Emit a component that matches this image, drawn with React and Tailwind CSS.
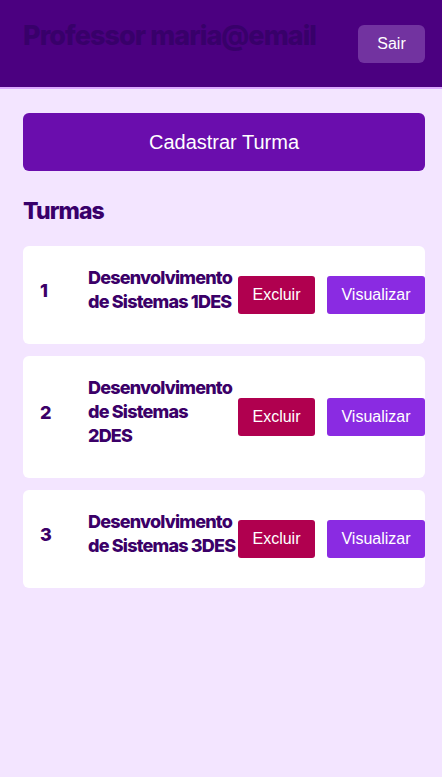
import React from 'react';

const turmas = [
  { id: 1, lines: ['Desenvolvimento', 'de Sistemas 1DES'] },
  { id: 2, lines: ['Desenvolvimento', 'de Sistemas', '2DES'] },
  { id: 3, lines: ['Desenvolvimento', 'de Sistemas 3DES'] },
];

function TurmaCard({ turma }) {
  return (
    <div className="bg-white rounded-md flex items-center pl-[17px] py-[20px]">
      <span className="w-[48px] shrink-0 mb-[10px] text-[18px] font-extrabold text-[#3b0068] font-['Inter',sans-serif]">
        {turma.id}
      </span>
      <div className="w-[150px] shrink-0 mb-[10px] text-[18px] leading-[24px] font-extrabold tracking-[-0.045em] text-[#3b0068] whitespace-nowrap font-['Inter',sans-serif]">
        {turma.lines.map((l) => (
          <div key={l}>{l}</div>
        ))}
      </div>
      <div className="flex items-center gap-3">
        <button className="h-[38px] w-[77px] rounded-[3px] bg-[#b0004f] text-white text-[16px]">Excluir</button>
        <button className="h-[38px] w-[98px] rounded-[3px] bg-[#8a2be2] text-white text-[16px]">Visualizar</button>
      </div>
    </div>
  );
}

export default function App() {
  return (
    <div className="min-h-[777px] bg-[#f3e5ff] font-['Liberation_Sans',Arial,sans-serif]">
      <header className="h-[89px] bg-[#4b0080] border-b-2 border-[#dca8ff] flex justify-between items-start pl-[23px] pr-[17px] pt-[25px]">
        <h1 className="text-[27px] leading-[30px] font-extrabold tracking-[-0.035em] text-[#38006a] -mt-[4px] font-['Inter',sans-serif]">
          Professor maria@email
        </h1>
        <button className="h-[38px] w-[67px] rounded-md bg-[#7233a0] text-white text-[16px]">
          Sair
        </button>
      </header>
      <main className="pl-[23px] pr-[17px] pt-[24px]">
        <button className="w-full h-[58px] rounded-md bg-[#6a0dad] text-white text-[20px]">
          Cadastrar Turma
        </button>
        <h2 className="mt-[26px] text-[23px] leading-[28px] font-extrabold tracking-[-0.04em] text-[#38006a] font-['Inter',sans-serif]">
          Turmas
        </h2>
        <div className="mt-[21px] flex flex-col gap-3">
          {turmas.map((t) => (
            <TurmaCard key={t.id} turma={t} />
          ))}
        </div>
      </main>
    </div>
  );
}
